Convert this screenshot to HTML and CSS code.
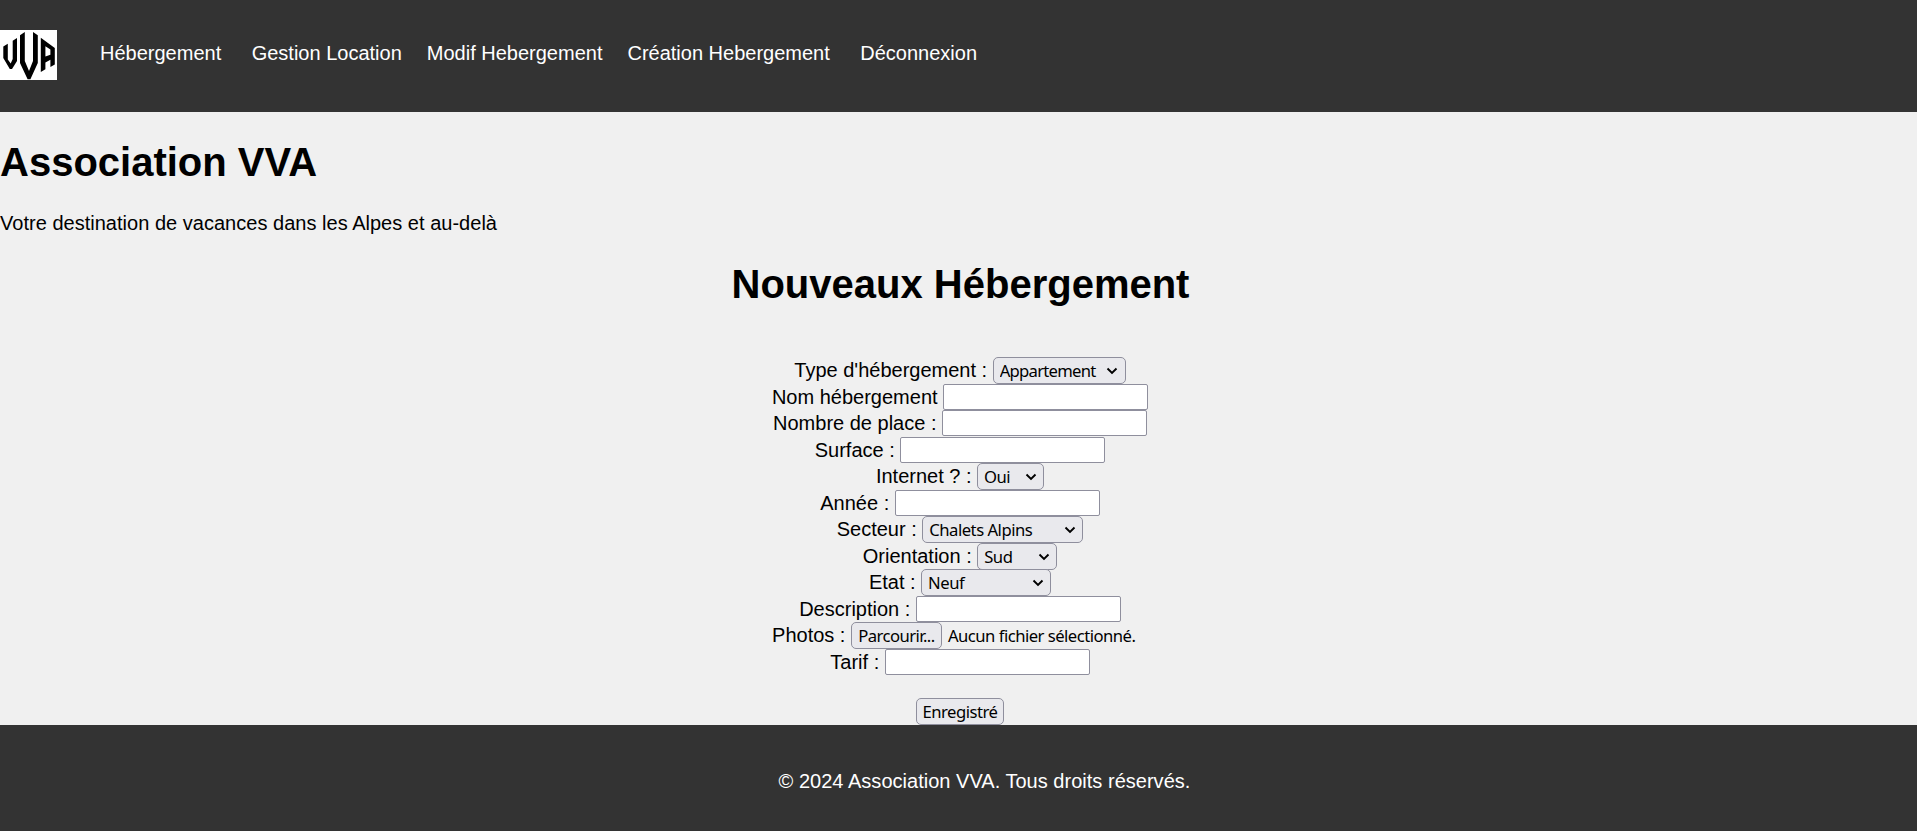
FILE: index.html
```html
<!DOCTYPE html>
<html lang="fr">
<head>
<meta charset="utf-8">
<title>Association VVA</title>
<link rel="stylesheet" href="styles.css">
</head>
<body>
<header class="header">
  <svg class="logo" viewBox="0 0 57 50" role="img" aria-label="VVA">
    <rect width="57" height="50" fill="#fff"/>
    <path d="M3.3 16.5L7.8 13.8V29.5L10.7 33.5L12.7 29V10.8L17 8V31L12 39H9.8L3.3 28Z"/>
    <path d="M20 5.2L24.8 2V31L29 41L33 31V2L37.8 5.2V33L30.4 49.3H27.6L20 33Z"/>
    <path fill-rule="evenodd" d="M40.8 7.8L54.8 18V34.5L50.4 37V29.8L45.4 32.5V39.2L40.8 42ZM45.4 16.2V26.5L50.4 24.8V19.5Z"/>
  </svg>
  <nav class="nav">
    <a class="nav-link">Hébergement</a>
    <a class="nav-link nav-link-spaced">Gestion Location</a>
    <a class="nav-link">Modif Hebergement</a>
    <a class="nav-link">Création Hebergement</a>
    <a class="nav-link nav-link-spaced">Déconnexion</a>
  </nav>
</header>
<h1 class="title">Association VVA</h1>
<p class="tagline">Votre destination de vacances dans les Alpes et au-delà</p>
<main class="main">
  <h1 class="title form-title">Nouveaux Hébergement</h1>
  <form class="form">
    <div class="row"><label>Type d'hébergement :</label><span class="select type"><select><option>Appartement</option></select><svg class="chevron" viewBox="0 0 12 8"><path d="M1.5 1.5L6 6L10.5 1.5"/></svg></span></div>
    <div class="row"><label>Nom hébergement</label><input class="field" type="text"></div>
    <div class="row"><label>Nombre de place :</label><input class="field" type="text"></div>
    <div class="row"><label>Surface :</label><input class="field" type="text"></div>
    <div class="row"><label>Internet ? :</label><span class="select internet"><select><option>Oui</option></select><svg class="chevron" viewBox="0 0 12 8"><path d="M1.5 1.5L6 6L10.5 1.5"/></svg></span></div>
    <div class="row"><label>Année :</label><input class="field" type="text"></div>
    <div class="row"><label>Secteur :</label><span class="select sector"><select><option>Chalets Alpins</option></select><svg class="chevron" viewBox="0 0 12 8"><path d="M1.5 1.5L6 6L10.5 1.5"/></svg></span></div>
    <div class="row"><label>Orientation :</label><span class="select orientation"><select><option>Sud</option></select><svg class="chevron" viewBox="0 0 12 8"><path d="M1.5 1.5L6 6L10.5 1.5"/></svg></span></div>
    <div class="row"><label>Etat :</label><span class="select state"><select><option>Neuf</option></select><svg class="chevron" viewBox="0 0 12 8"><path d="M1.5 1.5L6 6L10.5 1.5"/></svg></span></div>
    <div class="row"><label>Description :</label><input class="field" type="text"></div>
    <div class="row"><label>Photos :</label><span class="file"><button class="button browse" type="button">Parcourir...</button><span class="file-name">Aucun fichier sélectionné.</span></span></div>
    <div class="row"><label>Tarif :</label><input class="field" type="text"></div>
    <button class="button submit" type="button">Enregistré</button>
  </form>
</main>
<footer class="footer"><p class="copyright">© 2024 Association VVA. Tous droits réservés.</p></footer>
</body>
</html>
```
FILE: styles.css
```css
* { box-sizing: border-box; }
body {
  margin: 0;
  min-height: 831px;
  display: flex;
  flex-direction: column;
  background: #f0f0f0;
  color: #000;
  font: 20px/23px "Liberation Sans", Arial, sans-serif;
}
.header {
  height: 112px;
  padding-top: 30px;
  display: flex;
  align-items: flex-start;
  background: #333;
  color: #fff;
}
.logo { width: 57px; height: 50px; display: block; }
.nav { display: flex; gap: 25px; padding: 12px 0 0 43px; }
.nav-link { white-space: nowrap; }
.nav-link-spaced { margin-left: 5.5px; }
.title { margin: 27px 0 0; font-size: 40px; line-height: 46px; font-weight: bold; }
.tagline { margin: 27px 0 0; letter-spacing: 0.02px; }
.main { padding-left: 3px; }
.form-title { margin-top: 26px; padding-left: 1px; text-align: center; }
.form {
  display: flex;
  flex-direction: column;
  align-items: center;
  padding-top: 50px;
}
.row { height: 26.54px; display: flex; align-items: flex-start; gap: 5.5px; white-space: nowrap; }
.row label { padding-top: 2px; }
.field, .select select, .button {
  margin: 0;
  border: 1px solid #8f8f9d;
  font: 16.67px/20px "Noto Sans", sans-serif;
  color: #000;
}
.field { width: 205px; height: 26px; border-radius: 2px; background: #fff; }
.select { position: relative; display: block; height: 27px; }
.select select {
  display: block;
  width: 100%;
  height: 27px;
  padding: 1px 0 0 6px;
  appearance: none;
  border-radius: 5px;
  background: #e9e9ed;
  letter-spacing: -0.5px;
}
.chevron {
  position: absolute;
  right: 7.5px;
  top: 10px;
  width: 12px;
  height: 8px;
  fill: none;
  stroke: #000;
  stroke-width: 1.9;
}
.type { width: 133px; }
.type select { letter-spacing: -0.75px; }
.internet { width: 67px; }
.sector { width: 161px; }
.orientation { width: 80px; }
.state { width: 130px; }
.button {
  height: 27px;
  padding: 1px 0 0;
  border-radius: 5px;
  background: #e9e9ed;
  letter-spacing: -0.5px;
  white-space: nowrap;
}
.browse { width: 91px; letter-spacing: -0.55px; }
.file { width: 297px; display: flex; gap: 6px; font: 16.67px/27px "Noto Sans", sans-serif; letter-spacing: -0.52px; }
.submit { width: 88px; margin-top: 22.5px; }
.footer { flex: 1; background: #333; color: #fff; text-align: center; padding: 45px 0 0 52px; }
.copyright { margin: 0; letter-spacing: 0.02px; }
```
